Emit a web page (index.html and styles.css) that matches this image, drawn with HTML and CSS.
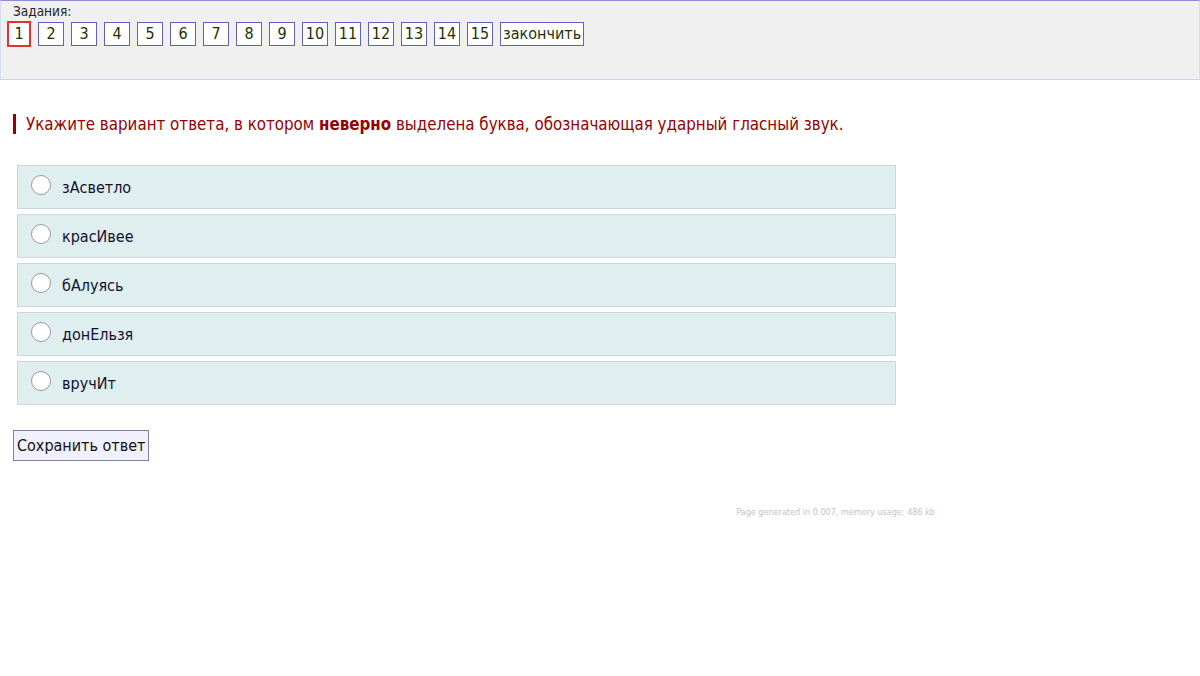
FILE: index.html
```html
<!DOCTYPE html>
<html lang="ru">
<head>
  <meta charset="UTF-8" />
  <title>Тест</title>
  <link rel="stylesheet" href="styles.css">
</head>
<body>
  <!-- Task navigation -->
  <div class="tasks">
    <div class="tasks-title">Задания:</div>
    <div class="task-list">
      <span class="task current">1</span>
      <span class="task">2</span>
      <span class="task">3</span>
      <span class="task">4</span>
      <span class="task">5</span>
      <span class="task">6</span>
      <span class="task">7</span>
      <span class="task">8</span>
      <span class="task">9</span>
      <span class="task">10</span>
      <span class="task">11</span>
      <span class="task">12</span>
      <span class="task">13</span>
      <span class="task">14</span>
      <span class="task">15</span>
      <span class="task finish">закончить</span>
    </div>
  </div>

  <div class="content">
    <div class="question">Укажите вариант ответа, в котором <b>неверно</b> выделена буква, обозначающая ударный гласный звук.</div>

    <div class="answers">
      <label class="answer"><span class="radio"></span>зАсветло</label>
      <label class="answer"><span class="radio"></span>красИвее</label>
      <label class="answer"><span class="radio"></span>бАлуясь</label>
      <label class="answer"><span class="radio"></span>донЕльзя</label>
      <label class="answer"><span class="radio"></span>вручИт</label>
    </div>

    <button class="save">Сохранить ответ</button>

    <div class="footer">Page generated in 0.007, memory usage: 486 kb</div>
  </div>
</body>
</html>
```

FILE: styles.css
```css
body {
  margin: 0;
  font-family: Tahoma, "DejaVu Sans Condensed", "Liberation Sans", sans-serif;
  font-stretch: condensed;
  background: #fff;
}

.tasks {
  height: 78px;
  background: #f0f0f0;
  border-top: 1px solid #8c8cd0;
  border-bottom: 1px solid #c8d4f4;
  border-left: 1px solid #d8dcf0;
  border-right: 1px solid #d8dcf0;
}

.tasks-title {
  font-size: 13.5px;
  color: #222;
  padding: 2px 0 0 12px;
  line-height: 16px;
}

.task-list {
  display: flex;
  gap: 7px;
  padding: 2px 0 0 6px;
}

.task {
  box-sizing: border-box;
  min-width: 26px;
  height: 24px;
  padding: 0 2px;
  border: 1px solid #6060c0;
  background: #fff;
  color: #223300;
  font-size: 16px;
  line-height: 22px;
  text-align: center;
  margin-top: 1px;
}

.task.current {
  border: 2px solid #e83030;
  min-width: 24px;
  height: 26px;
  line-height: 22px;
  margin-top: 0;
}

.content {
  padding: 0 0 0 13px;
}

.question {
  margin-top: 34px;
  border-left: 3px solid #990000;
  padding-left: 10px;
  color: #990000;
  font-size: 16.8px;
  line-height: 20px;
}

.answers {
  display: flex;
  flex-direction: column;
  gap: 5px;
  margin: 31px 0 0 4px;
  width: 879px;
}

.answer {
  box-sizing: border-box;
  height: 44px;
  display: flex;
  align-items: center;
  background: #dfeeee;
  border: 1px solid #cfd8d8;
  color: #111133;
  font-size: 16px;
  padding-left: 13px;
  cursor: pointer;
}

.radio {
  box-sizing: border-box;
  width: 20px;
  height: 20px;
  border-radius: 50%;
  border: 1px solid #9a9a9a;
  background: #fff;
  margin: -4px 11px 0 0;
}

.save {
  margin-top: 25px;
  background: #f0f0ff;
  border: 1px solid #8080a0;
  font-family: inherit;
  font-stretch: condensed;
  font-size: 16px;
  color: #111;
  padding: 3px 3px;
  height: 31px;
}

.footer {
  width: 922px;
  text-align: right;
  margin-top: 46px;
  font-size: 9px;
  color: #c4c4c4;
}
```
